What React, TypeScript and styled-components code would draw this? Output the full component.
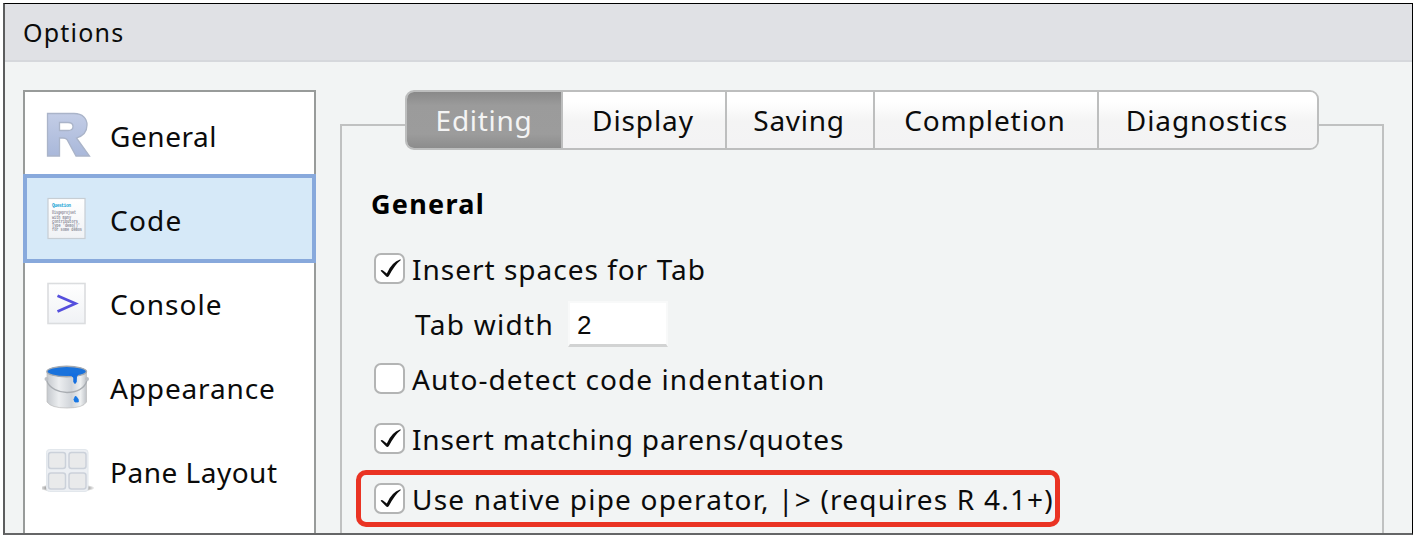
import React from "react";
import styled, { createGlobalStyle, css } from "styled-components";

const GlobalStyle = createGlobalStyle`
  body { margin: 0; background: #fff; }
  * { box-sizing: border-box; }
`;

const Page = styled.div`
  width: 1416px;
  height: 536px;
  padding: 3px 3px 1px 3px;
  overflow: hidden;
  font-family: "Noto Sans", "Open Sans", sans-serif;
  font-size: 28px;
  line-height: 36px;
  color: #0b0b0b;
`;

const Dialog = styled.div`
  display: flex;
  flex-direction: column;
  width: 1410px;
  height: 532px;
  border: 1px solid #000;
  border-left: 2px solid #5c5d5e;
  border-bottom: 2px solid #656667;
  background: #f2f4f4;
  overflow: hidden;
`;

const TitleBar = styled.header`
  flex: none;
  height: 58px;
  padding: 10px 18px;
  background: #e0e1e5;
  border-bottom: 2px solid #d6d8dc;
  font-size: 25px;
`;

const Body = styled.div`
  display: flex;
  align-items: flex-start;
  padding: 28px 28px 0 18px;
  gap: 24px;
`;

const Sidebar = styled.nav`
  flex: none;
  width: 293px;
  height: 500px;
  border: 2px solid #989b9a;
  background: #fff;
`;

const Label = styled.span<{ $spacing?: number }>`
  white-space: pre;
  letter-spacing: ${(p) => p.$spacing ?? 0}px;
`;

const NavItem = styled.div<{ $selected?: boolean }>`
  display: flex;
  align-items: center;
  height: 84px;
  padding-left: 17px;
  gap: 16px;
  ${Label} { padding-top: 4px; }
  ${(p) =>
    p.$selected &&
    css`
      height: 89px;
      margin: -2px -2px -3px;
      padding-left: 15px;
      border: 4px solid #88a9dc;
      background: #d6e9f8;
      ${Label} { padding-top: 2px; }
    `}
`;

const Icon = styled.svg`
  flex: none;
  width: 52px;
  height: 52px;
`;

const Panel = styled.main`
  flex: none;
  width: 1044px;
`;

const Fieldset = styled.section`
  height: 500px;
  margin-top: 34px;
  border: 2px solid #c0c1c1;
  padding: 0 14px;
`;

const Tabs = styled.div`
  position: relative;
  display: flex;
  width: 914px;
  height: 60px;
  margin: -36px 0 0 49px;
  border: 2px solid #bdbebe;
  border-radius: 9px;
  overflow: hidden;
`;

const Tab = styled.div<{ $width: number; $active?: boolean }>`
  display: flex;
  align-items: center;
  justify-content: center;
  width: ${(p) => p.$width}px;
  background: linear-gradient(#fff 0, #fff 18%, #f4f4f4 52%, #f3f3f4 100%);
  & + & { border-left: 2px solid #bdbebe; padding-right: 2px; }
  ${(p) =>
    p.$active &&
    css`
      color: #f4f4f4;
      background: linear-gradient(#898989, #9b9b9b 24%, #9c9c9c 75%, #8c8c8c);
    `}
`;

const Heading = styled.h2`
  margin: 36px 0 0 15px;
  font-size: 27px;
  line-height: 36px;
  font-weight: 700;
  color: #000;
`;

const Row = styled.div<{ $top: number }>`
  display: flex;
  align-items: center;
  height: 36px;
  margin-top: ${(p) => p.$top}px;
  padding-left: 18px;
  gap: 7px;
`;

const Box = styled.span`
  flex: none;
  display: flex;
  width: 31px;
  height: 31px;
  margin-bottom: 1px;
  border: 2px solid #b3b4b4;
  border-radius: 7px;
  background: #fff;
`;

const WidthRow = styled(Row)`
  height: 44px;
  padding-left: 59px;
  gap: 14px;
`;

const NumberField = styled.div`
  width: 100px;
  height: 46px;
  padding: 4px 7px;
  border: 2px solid #f8f9f9;
  border-bottom: 3px solid #d2d3d3;
  background: #fff;
  font-family: "Liberation Sans", Arial, sans-serif;
  font-size: 26px;
`;

const Highlight = styled.div`
  display: flex;
  align-items: center;
  width: 704px;
  height: 57px;
  margin-top: 13px;
  padding-left: 13px;
  gap: 7px;
  border: 5px solid #ea3323;
  border-radius: 10px;
`;

const Check = ({ on = true }: { on?: boolean }) => (
  <Box>
    {on && (
      <svg width="27" height="27" viewBox="0 0 27 27">
        <path d="M4.600 15.800Q5.500 14.300 7.300 15.700L10.800 18.500Q15.500 7.500 24 4.600Q25.400 4.400 24.600 5.300Q19 9.500 13 20.800Q11.500 23 10 21.300Z" fill="#0c0c0c" />
      </svg>
    )}
  </Box>
);

const GeneralIcon = () => (
  <Icon viewBox="0 0 52 52">
    <defs>
      <linearGradient id="rFill" x1="0" y1="0" x2="0" y2="1">
        <stop offset="0" stopColor="#c3cde6" />
        <stop offset="1" stopColor="#a9b8da" />
      </linearGradient>
    </defs>
    <path fillRule="evenodd" d="M5.5 5.5H32C41 5.5 45 11 45 17C45 24 41 28 34.500 30L47.500 48H34L25 31.500Q23.500 30 21 30H17.500V48H5.500ZM17.500 14.500V22.500H26C30 22.500 31 21 31 18.500C31 16 30 14.500 26 14.500Z" fill="url(#rFill)" stroke="#aab4c9" strokeWidth="1.3" />
  </Icon>
);

const codeLines = ["Uisgeprojset", "with many", "contributors", "Type 'demo()'", "for some demos"];

const CodeIcon = () => (
  <Icon viewBox="0 0 52 52">
    <defs>
      <linearGradient id="paper" x1="0" y1="0" x2="0" y2="1">
        <stop offset="0" stopColor="#fff" />
        <stop offset="1" stopColor="#f0f2f5" />
      </linearGradient>
    </defs>
    <rect x="6" y="5.500" width="37" height="40" fill="url(#paper)" stroke="#c7ced4" strokeWidth="1.200" />
    <g fontFamily="Liberation Mono, monospace" fontSize="4.600">
      <text x="10" y="14" fill="#17a3d6" fontWeight="700" textLength="19">Question</text>
      {codeLines.map((line, i) => (
        <text key={line} x="10" y={21.200 + i * 4.300} fill="#8b8c98" fontWeight="700" textLength={[24, 19, 26, 28, 30][i]} lengthAdjust="spacingAndGlyphs">{line}</text>
      ))}
    </g>
  </Icon>
);

const ConsoleIcon = () => (
  <Icon viewBox="0 0 52 52">
    <rect x="6" y="7.500" width="37" height="40" fill="url(#paper)" stroke="#dbdddf" strokeWidth="1.600" />
    <path d="M15.500 19.800L33.500 27.500L15.500 35.500" fill="none" stroke="#554fdd" strokeWidth="2.700" />
  </Icon>
);

const AppearanceIcon = () => (
  <Icon viewBox="0 -1 52 52">
    <defs>
      <linearGradient id="metal">
        <stop offset="0" stopColor="#c5c9ce" />
        <stop offset=".3" stopColor="#eceef0" />
        <stop offset=".62" stopColor="#d0d4d9" />
        <stop offset=".85" stopColor="#eef0f1" />
        <stop offset="1" stopColor="#bfc3c8" />
      </linearGradient>
    </defs>
    <path d="M5 11V41Q9 47 25 47Q41 47 44.500 41V11Z" fill="url(#metal)" stroke="#bbb" strokeWidth=".7" />
    <ellipse cx="24.700" cy="10.500" rx="19.800" ry="5.200" fill="#1972dc" stroke="#a4a9b0" strokeWidth="1.400" />
    <path d="M27 13H36Q33.800 15 34.200 21Q33 24 31.800 21V17Q30.500 14 27 14Z" fill="#146fe0" stroke="#146fe0" strokeWidth="1" />
    <path d="M33.500 35Q37.300 38 36.300 41H33Q30.500 39 33.500 35Z" fill="#1777e4" stroke="#1777e4" strokeWidth=".8" />
    <path d="M4.500 19C7 28 18 31.500 25 31.500C34 31.500 43 28 45 19" fill="none" stroke="#a9adb2" strokeWidth="1.300" />
    <circle cx="4.500" cy="18" r="2" fill="#bcc0c5" />
    <circle cx="45" cy="18" r="2" fill="#bcc0c5" />
  </Icon>
);

const PaneIcon = () => (
  <Icon viewBox="0 0 52 52">
    <defs>
      <radialGradient id="shade">
        <stop offset="0" stopColor="#777" />
        <stop offset=".7" stopColor="#8f8f8f" />
        <stop offset="1" stopColor="#fff" />
      </radialGradient>
    </defs>
    <ellipse cx="25" cy="44" rx="28" ry="4.500" fill="url(#shade)" />
    <rect x="4.500" y="5.500" width="41.500" height="42" rx="3" fill="#eceff3" stroke="#e2e7ec" />
    {[[6.500, 8.500], [27, 8.500], [6.500, 29], [27, 29]].map(([x, y]) => (
      <rect key={`${x}-${y}`} x={x} y={y} width="17" height="16" rx="2.500" fill="#e9eaeb" stroke="#cbd1da" strokeWidth="1.500" />
    ))}
  </Icon>
);

const App = () => (
  <>
    <GlobalStyle />
    <Page>
      <Dialog>
        <TitleBar><Label $spacing={1.2}>Options</Label></TitleBar>
        <Body>
          <Sidebar>
            <NavItem><GeneralIcon /><Label $spacing={0.55}>General</Label></NavItem>
            <NavItem $selected><CodeIcon /><Label $spacing={1.2}>Code</Label></NavItem>
            <NavItem><ConsoleIcon /><Label $spacing={1.05}>Console</Label></NavItem>
            <NavItem><AppearanceIcon /><Label $spacing={0.85}>Appearance</Label></NavItem>
            <NavItem><PaneIcon /><Label $spacing={0.5}>Pane Layout</Label></NavItem>
          </Sidebar>
          <Panel>
            <Fieldset>
              <Tabs>
                <Tab $width={154} $active><Label $spacing={0.7}>Editing</Label></Tab>
                <Tab $width={164}><Label $spacing={0.9}>Display</Label></Tab>
                <Tab $width={148}><Label $spacing={0.7}>Saving</Label></Tab>
                <Tab $width={224}><Label $spacing={0.9}>Completion</Label></Tab>
                <Tab $width={220}><Label $spacing={0.9}>Diagnostics</Label></Tab>
              </Tabs>
              <Heading><Label $spacing={1.3}>General</Label></Heading>
              <Row $top={29}><Check /><Label $spacing={1}>Insert spaces for Tab</Label></Row>
              <WidthRow $top={15}><Label $spacing={1.3}>Tab width</Label><NumberField>2</NumberField></WidthRow>
              <Row $top={15}><Check on={false} /><Label $spacing={1.05}>Auto-detect code indentation</Label></Row>
              <Row $top={24}><Check /><Label $spacing={0.82}>Insert matching parens/quotes</Label></Row>
              <Highlight><Check /><Label $spacing={1.2}>Use native pipe operator, |&gt; (requires R 4.1+)</Label></Highlight>
            </Fieldset>
          </Panel>
        </Body>
      </Dialog>
    </Page>
  </>
);

export default App;
